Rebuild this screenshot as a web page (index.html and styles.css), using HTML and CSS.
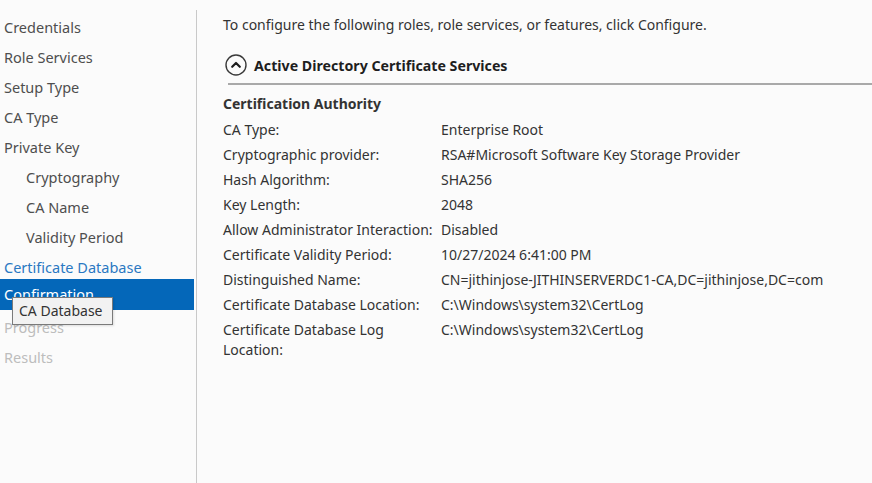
FILE: index.html
```html
<!DOCTYPE html>
<html lang="en">
<head>
<meta charset="utf-8">
<title>Confirmation</title>
<link rel="stylesheet" href="styles.css">
</head>
<body>
<div class="window">
  <nav class="steps">
    <ul class="step-list">
      <li class="step">Credentials</li>
      <li class="step">Role Services</li>
      <li class="step">Setup Type</li>
      <li class="step">CA Type</li>
      <li class="step">Private Key</li>
      <li class="step sub">Cryptography</li>
      <li class="step sub">CA Name</li>
      <li class="step sub">Validity Period</li>
      <li class="step link">Certificate Database</li>
      <li class="step active">Confirmation
        <span class="tooltip">CA Database</span>
      </li>
      <li class="step disabled">Progress</li>
      <li class="step disabled">Results</li>
    </ul>
  </nav>
  <div class="divider"></div>
  <main class="content">
    <p class="intro">To configure the following roles, role services, or features, click Configure.</p>
    <div class="section-head">
      <svg class="collapse" width="22" height="22" viewBox="0 0 22 22" aria-hidden="true">
        <circle cx="11" cy="11" r="10" fill="none" stroke="#3a3a3a" stroke-width="1.4"/>
        <path d="M7.2 12.8 L11 9 L14.8 12.8" fill="none" stroke="#1e1e1e" stroke-width="2.2" stroke-linecap="round" stroke-linejoin="round"/>
      </svg>
      <span class="section-title">Active Directory Certificate Services</span>
    </div>
    <div class="rule"></div>
    <h2 class="group-title">Certification Authority</h2>
    <dl class="props">
      <dt>CA Type:</dt><dd>Enterprise Root</dd>
      <dt>Cryptographic provider:</dt><dd>RSA#Microsoft Software Key Storage Provider</dd>
      <dt>Hash Algorithm:</dt><dd>SHA256</dd>
      <dt>Key Length:</dt><dd>2048</dd>
      <dt>Allow Administrator Interaction:</dt><dd>Disabled</dd>
      <dt>Certificate Validity Period:</dt><dd>10/27/2024 6:41:00 PM</dd>
      <dt>Distinguished Name:</dt><dd>CN=jithinjose-JITHINSERVERDC1-CA,DC=jithinjose,DC=com</dd>
      <dt>Certificate Database Location:</dt><dd>C:\Windows\system32\CertLog</dd>
      <dt>Certificate Database Log<br>Location:</dt><dd>C:\Windows\system32\CertLog</dd>
    </dl>
  </main>
</div>
</body>
</html>
```

FILE: styles.css
```css
* { box-sizing: border-box; }
html, body {
  margin: 0;
  padding: 0;
  background: #fbfbfb;
}
body {
  font-family: "Noto Sans", "Open Sans", sans-serif;
  color: #333;
}
.window {
  display: flex;
  height: 483px;
  overflow: hidden;
}
.steps {
  width: 194px;
  flex: none;
  margin-right: 2px;
}
.step-list {
  list-style: none;
  margin: 0;
  padding: 12px 0 0 0;
}
.step {
  position: relative;
  height: 30px;
  line-height: 30px;
  padding-left: 4px;
  font-size: 14.5px;
  color: #4e4e4e;
  white-space: nowrap;
}
.step.sub { padding-left: 26px; }
.step.link { color: #2a78c2; }
.step.active {
  background: #0467b9;
  color: #fff;
  height: 31px;
  margin-top: -3px;
  margin-bottom: 2px;
  line-height: 31px;
}
.step.disabled { color: #bdbdbd; }
.tooltip {
  position: absolute;
  left: 12px;
  top: 18px;
  width: 101px;
  height: 28px;
  line-height: 26px;
  padding-left: 6px;
  background: #f2f2f2;
  border: 1px solid #7a7a7a;
  color: #333;
  font-size: 14px;
  box-shadow: 1px 1px 2px rgba(0,0,0,0.12);
  z-index: 2;
}
.divider {
  width: 1px;
  flex: none;
  margin-top: 10px;
  background: #c9c9c9;
}
.content {
  flex: 1;
  padding: 15px 0 0 26px;
  font-size: 14px;
}
.intro {
  margin: 0;
  line-height: 20px;
  color: #333;
}
.section-head {
  display: flex;
  align-items: center;
  gap: 7px;
  height: 24px;
  margin-top: 18px;
  margin-left: 2px;
}
.collapse { flex: none; }
.section-title {
  font-weight: 700;
  font-size: 14.2px;
  color: #1e1e1e;
}
.rule {
  height: 2px;
  margin: 6px 0 0 5px;
  background: #a9a9a9;
}
.group-title {
  margin: 9px 0 0 0;
  font-size: 14px;
  font-weight: 700;
  line-height: 20px;
  color: #333;
}
.props {
  display: grid;
  grid-template-columns: 218px 1fr;
  row-gap: 5px;
  margin: 6px 0 0 0;
  line-height: 20px;
}
.props dt, .props dd {
  margin: 0;
  white-space: nowrap;
}
```
